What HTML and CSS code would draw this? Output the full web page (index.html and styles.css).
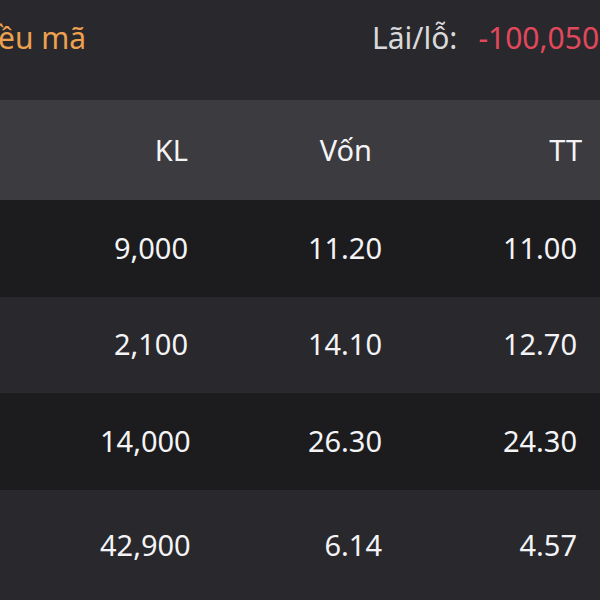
FILE: index.html
```html
<!DOCTYPE html>
<html lang="vi">
<head>
<meta charset="utf-8">
<link rel="stylesheet" href="styles.css">
</head>
<body>
<div class="topbar">
  <span class="mode">ều mã</span>
  <div class="pnl"><span class="pnl-label">Lãi/lỗ:</span><span class="pnl-value">-100,050,000</span></div>
</div>
<div class="table">
  <div class="row head">
    <div class="cell c0"></div>
    <div class="cell c1">KL</div>
    <div class="cell c2">Vốn</div>
    <div class="cell c3">TT</div>
  </div>
  <div class="row dark">
    <div class="cell c0"></div>
    <div class="cell c1">9,000</div>
    <div class="cell c2">11.20</div>
    <div class="cell c3">11.00</div>
  </div>
  <div class="row light">
    <div class="cell c0"></div>
    <div class="cell c1">2,100</div>
    <div class="cell c2">14.10</div>
    <div class="cell c3">12.70</div>
  </div>
  <div class="row dark">
    <div class="cell c0"></div>
    <div class="cell c1">14,000</div>
    <div class="cell c2">26.30</div>
    <div class="cell c3">24.30</div>
  </div>
  <div class="row light last">
    <div class="cell c0"></div>
    <div class="cell c1">42,900</div>
    <div class="cell c2">6.14</div>
    <div class="cell c3">4.57</div>
  </div>
</div>
</body>
</html>
```
FILE: styles.css
```css
html, body {
  margin: 0;
  padding: 0;
  width: 600px;
  height: 600px;
  overflow: hidden;
  background: #28282d;
  font-family: "Noto Sans", "Open Sans", sans-serif;
}
.topbar {
  height: 100px;
  box-sizing: border-box;
  padding-top: 17px;
  background: #28282d;
  display: flex;
  align-items: flex-start;
  justify-content: space-between;
  font-size: 30px;
  white-space: nowrap;
  overflow: hidden;
}
.mode {
  color: #eea14e;
  margin-left: -2px;
}
.pnl {
  display: flex;
  width: 228px;
  flex-shrink: 0;
}
.pnl-label {
  color: #d9d9dc;
  margin-right: 21px;
}
.pnl-value {
  color: #e2485c;
}
.table {
  display: flex;
  flex-direction: column;
}
.row {
  display: grid;
  grid-template-columns: 100px 88px 194px 195px 23px;
  height: 96.5px;
  align-items: center;
  color: #f4f4f6;
  font-size: 29px;
}
.row.head {
  height: 100px;
  background: #3c3c40;
}
.row.dark {
  background: #1c1c1f;
}
.row.light {
  background: #28282d;
}
.row.last {
  height: 112px;
}
.cell {
  text-align: right;
  white-space: nowrap;
  padding-bottom: 2px;
}
.head .c2 {
  padding-right: 10px;
}
.head .c3 {
  margin-right: -5px;
}
```
